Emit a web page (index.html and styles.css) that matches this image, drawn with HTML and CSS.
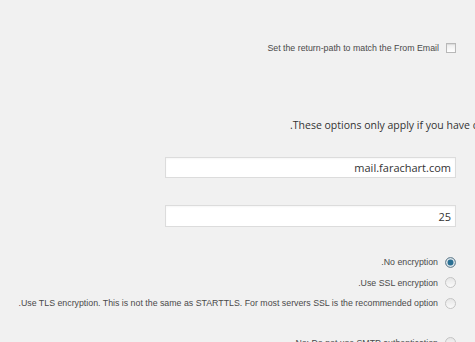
FILE: index.html
```html
<!DOCTYPE html>
<html lang="en" dir="rtl">

<head>
    <meta charset="UTF-8">
    <meta name="viewport" content="width=device-width, initial-scale=1.0">
    <title>SMTP Options</title>
    <link rel="stylesheet" href="styles.css">
</head>

<body>
    <div class="page">
        <label class="opt-row first">
            <span class="checkbox"></span>
            <span class="opt-text">Set the return-path to match the From Email</span>
        </label>

        <div class="note">
            <span class="note-text" dir="rtl">These options only apply if you have chosen to send mail by SMTP above.</span>
        </div>

        <div class="field host">
            <span class="field-value">mail.farachart.com</span>
        </div>

        <div class="field port">
            <span class="field-value">25</span>
        </div>

        <div class="radio-group">
            <label class="opt-row">
                <span class="radio checked"></span>
                <span class="opt-text">No encryption.</span>
            </label>
            <label class="opt-row">
                <span class="radio"></span>
                <span class="opt-text">Use SSL encryption.</span>
            </label>
            <label class="opt-row">
                <span class="radio"></span>
                <span class="opt-text">Use TLS encryption. This is not the same as STARTTLS. For most servers SSL is the recommended option.</span>
            </label>
        </div>

        <div class="radio-group auth">
            <label class="opt-row">
                <span class="radio"></span>
                <span class="opt-text">No: Do not use SMTP authentication.</span>
            </label>
        </div>
    </div>
</body>

</html>
```

FILE: styles.css
```css
html {
    overflow: hidden;
}

body {
    margin: 0;
    padding: 0;
    background: #f1f1f1;
    color: #444;
    font-family: "Liberation Sans", Arial, sans-serif;
}

.page {
    padding-right: 19px;
}

.opt-row {
    display: flex;
    align-items: center;
    gap: 7px;
    height: 20px;
    font-size: 8.8px;
    color: #4a4a4a;
}

.opt-row.first {
    margin-top: 38px;
}

.checkbox {
    width: 8px;
    height: 8px;
    border: 1px solid #b8b8b8;
    background: linear-gradient(#ececec, #fff);
    box-shadow: inset 0 1px 1px rgba(0, 0, 0, 0.08);
}

.radio {
    width: 9px;
    height: 9px;
    border: 1px solid #c4c4c4;
    border-radius: 50%;
    background: linear-gradient(#e6e6e6, #fafafa);
}

.radio.checked {
    border-color: #7f909c;
    background: #2a6f93;
    box-shadow: inset 0 0 0 1.5px #dfe6ea;
}

.note {
    direction: ltr;
    padding-left: 290px;
    margin-top: 60px;
    white-space: nowrap;
    font-family: "Open Sans", "Liberation Sans", sans-serif;
    font-size: 10.5px;
    line-height: 14px;
    color: #333;
}

.note-text {
    unicode-bidi: isolate;
}

.field {
    width: 291px;
    height: 21px;
    box-sizing: border-box;
    border: 1px solid #dcdcdc;
    background: #fff;
    display: flex;
    align-items: center;
    padding: 0 4px 0 8px;
    direction: ltr;
    justify-content: flex-end;
    font-family: "Open Sans", "Liberation Sans", sans-serif;
    font-size: 11px;
    color: #333;
    box-shadow: inset 0 1px 2px rgba(0, 0, 0, 0.04);
}

.field.host {
    margin-top: 25px;
}

.field.port {
    height: 22px;
    margin-top: 27px;
}

.radio-group {
    margin-top: 25px;
}

.radio-group .opt-row {
    height: 20.5px;
}

.radio-group.auth {
    margin-top: 19px;
}
```
